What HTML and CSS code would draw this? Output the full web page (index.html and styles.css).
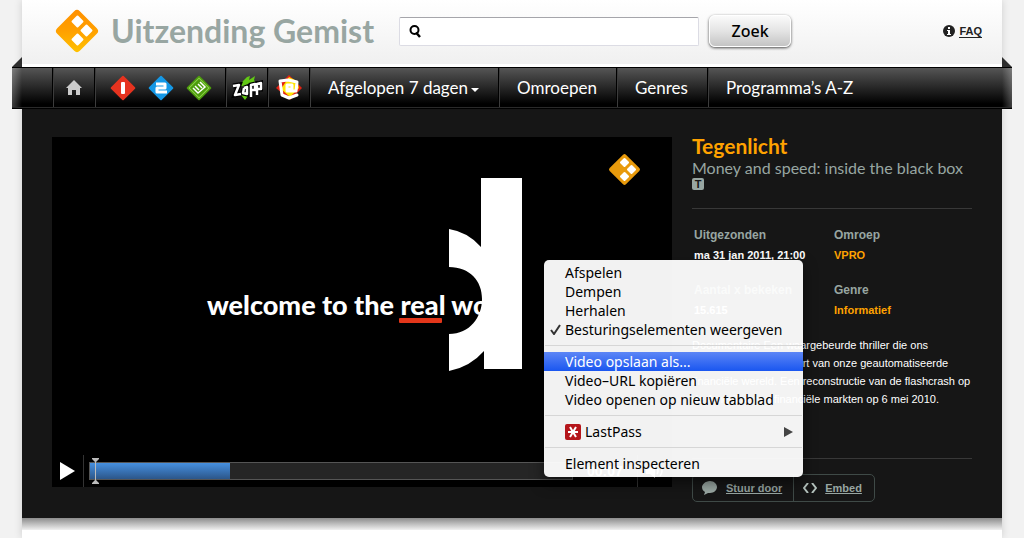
FILE: index.html
```html
<!DOCTYPE html>
<html lang="nl">
<head>
    <meta charset="UTF-8">
    <meta name="viewport" content="width=device-width, initial-scale=1.0">
    <title>Uitzending Gemist - Tegenlicht</title>

    <link rel="stylesheet" href="styles.css">
</head>
<body>
    <div class="page">
        <header class="header">
            <a href="#" class="brand">
                <svg class="logo" viewBox="0 0 44 44" width="44" height="44" aria-hidden="true">
                    <defs>
                        <linearGradient id="logoFill" x1="0" y1="0" x2="1" y2="1">
                            <stop offset="0" stop-color="#ff8f00"/>
                            <stop offset="0.5" stop-color="#ffa000"/>
                            <stop offset="1" stop-color="#ffc400"/>
                        </linearGradient>
                    </defs>
                    <rect x="6" y="6" width="32" height="32" rx="4" fill="url(#logoFill)" transform="rotate(45 22 22)"/>
                    <g fill="#fff">
                        <rect x="18" y="8" width="9" height="9" rx="1" transform="rotate(45 22.5 12.500)"/>
                        <rect x="27" y="17" width="9" height="9" rx="1" transform="rotate(45 31.500 21.500)"/>
                        <rect x="18" y="26" width="9" height="9" rx="1" transform="rotate(45 22.5 30.500)"/>
                    </g>
                </svg>
                <span class="brand-name">Uitzending Gemist</span>
            </a>
            <form class="search">
                <div class="search-box">
                    <svg class="search-icon" viewBox="0 0 12 13" width="12" height="13" aria-hidden="true">
                        <circle cx="5.500" cy="5" r="4" fill="none" stroke="#000" stroke-width="2"/>
                        <path d="M7 7.500L11 12" stroke="#000" stroke-width="2.500"/>
                    </svg>
                    <input type="text" name="q" class="search-input" aria-label="Zoeken">
                </div>
                <button type="submit" class="search-button">Zoek</button>
            </form>
            <a href="#" class="faq">
                <svg viewBox="0 0 12 12" width="12" height="12" aria-hidden="true">
                    <circle cx="6" cy="6" r="6" fill="#222"/>
                    <path d="M5 2h2v2H5zM4 5h3v4h1v1H4V9h1V6H4z" fill="#fff"/>
                </svg>
                <span>FAQ</span>
            </a>
        </header>

        <nav class="nav">
            <ul>
                <li class="nav-icon">
                    <a href="#" aria-label="Home">
                        <svg viewBox="0 0 16 15" width="16" height="15">
                            <path d="M8 0L16 8H14V15H10V10H6V15H2V8H0Z" fill="#ccc"/>
                        </svg>
                    </a>
                </li>
                <li class="channels">
                    <a href="#" aria-label="Nederland 1">
                        <svg viewBox="0 0 26 26" width="26" height="26">
                            <rect x="4" y="4" width="18" height="18" rx="1" fill="#e6331f" transform="rotate(45 13 13)"/>
                            <rect x="11" y="7" width="4" height="12" rx="1" fill="#fff"/>
                        </svg>
                    </a>
                    <a href="#" aria-label="Nederland 2">
                        <svg viewBox="0 0 26 26" width="26" height="26">
                            <rect x="4" y="4" width="18" height="18" rx="1" fill="#1598e6" transform="rotate(45 13 13)"/>
                            <path d="M8 9H17V13H9V17H19" fill="none" stroke="#fff" stroke-width="3" stroke-linejoin="round"/>
                        </svg>
                    </a>
                    <a href="#" aria-label="Nederland 3">
                        <svg viewBox="0 0 26 26" width="26" height="26">
                            <rect x="4" y="4" width="18" height="18" rx="1" fill="#4c9c0c" transform="rotate(45 13 13)"/>
                            <rect x="6" y="6" width="14" height="14" fill="none" stroke="#8fcf4c" transform="rotate(45 13 13)"/>
                            <path d="M7 13L12 18L19 12L14 7M9 11L13 15M12 9L16 13" fill="none" stroke="#fff" stroke-width="1.500"/>
                        </svg>
                    </a>
                </li>
                <li class="nav-icon">
                    <a href="#" aria-label="Zapp">
                        <svg viewBox="0 0 32 26" width="32" height="26">
                            <path d="M8 10L16 2L19 1L18 5L24 1L23 5L25 8L14 12ZM10 20L14 25L17 21Z" fill="#62c815"/>
                            <path d="M2 11L8 10L4 20L10 19M13 13L12 18L16 19V12L13 13M20 22V10L24 9V15H20M26 20V9L30 8V14H27" fill="none" stroke="#000" stroke-width="5"/>
                            <path d="M2 11L8 10L4 20L10 19M13 13L12 18L16 19V12L13 13M20 22V10L24 9V15H20M26 20V9L30 8V14H27" fill="none" stroke="#fff" stroke-width="2.500" stroke-linejoin="round"/>
                        </svg>
                    </a>
                </li>
                <li class="nav-icon">
                    <a href="#" aria-label="Zappelin">
                        <svg viewBox="0 0 28 28" width="28" height="28">
                            <path d="M14 1L27 14L15 26L1 14Z" fill="#e32213"/>
                            <path d="M14 3L22 7L24 14L15 23L6 15Z" fill="#ffe400"/>
                            <path d="M12 15H17V11H12V17H21L22 8L13 6L5 7L7 21L14 24L22 21" fill="none" stroke="#fff" stroke-width="3" stroke-linejoin="round" stroke-linecap="round"/>
                        </svg>
                    </a>
                </li>
                <li>
                    <a href="#">Afgelopen 7 dagen
                        <svg class="caret" viewBox="0 0 8 4" width="8" height="4" aria-hidden="true"><path d="M0 0H8L4 4Z" fill="#fff"/></svg>
                    </a>
                </li>
                <li><a href="#">Omroepen</a></li>
                <li><a href="#">Genres</a></li>
                <li><a href="#">Programma’s A-Z</a></li>
            </ul>
        </nav>

        <main class="main">
            <div class="player">
                <svg class="scene" viewBox="0 0 620 318" aria-hidden="true">
                    <path d="M429 41H470V232H432V214Q418 230 397 234V197C418 197 430 180 430 162S418 130 397 130V92Q416 95 429 110Z" fill="#fff"/>
                    <text x="155" y="178" class="scene-text">welcome to the real wo</text>
                    <rect x="347" y="181" width="43" height="5" rx="1" fill="#e2361a"/>
                    <g transform="translate(556 15)">
                        <rect x="5" y="6" width="23" height="23" rx="2" fill="#e89a0c" transform="rotate(45 16.500 17.500)"/>
                        <g fill="#fff">
                            <rect x="13" y="7" width="7" height="7" rx="1" transform="rotate(45 16.500 10.500)"/>
                            <rect x="20" y="14" width="7" height="7" rx="1" transform="rotate(45 23.500 17.500)"/>
                            <rect x="13" y="21" width="7" height="7" rx="1" transform="rotate(45 16.500 24.500)"/>
                        </g>
                    </g>
                </svg>
                <div class="controls">
                    <button type="button" class="play" aria-label="Afspelen">
                        <svg viewBox="0 0 15 18" width="15" height="18"><path d="M0 0L15 9L0 18Z" fill="#fff"/></svg>
                    </button>
                    <div class="track">
                        <div class="buffered"></div>
                        <svg class="handle" viewBox="0 0 7 26" width="7" height="26" aria-hidden="true">
                            <path d="M0 0H7V1L4 4V22L7 25V26H0V25L3 22V4L0 1Z" fill="#bbb"/>
                        </svg>
                    </div>
                    <span class="time">00:07</span>
                    <button type="button" class="volume" aria-label="Volume">
                        <svg viewBox="0 0 18 14" width="18" height="14">
                            <path d="M0 4H4L9 0V14L4 10H0Z" fill="#fff"/>
                            <path d="M11 4Q13 7 11 10M14 2Q18 7 14 12" fill="none" stroke="#fff" stroke-width="1.500"/>
                        </svg>
                    </button>
                </div>

                <!-- Context menu of the video -->
                <div class="menu" role="menu">
                    <button type="button" role="menuitem">Afspelen</button>
                    <button type="button" role="menuitem">Dempen</button>
                    <button type="button" role="menuitem">Herhalen</button>
                    <button type="button" role="menuitem">
                        <svg class="check" viewBox="0 0 11 11" width="11" height="11" aria-hidden="true"><path d="M1 6L4 10L10 1" fill="none" stroke="#333" stroke-width="2"/></svg>
                        Besturingselementen weergeven
                    </button>
                    <hr>
                    <button type="button" role="menuitem" class="active">Video opslaan als...</button>
                    <button type="button" role="menuitem">Video–URL kopiëren</button>
                    <button type="button" role="menuitem">Video openen op nieuw tabblad</button>
                    <hr>
                    <button type="button" role="menuitem">
                        <svg viewBox="0 0 16 16" width="16" height="16" aria-hidden="true">
                            <rect x="0" y="0" width="16" height="16" rx="2" fill="#b5161b"/>
                            <path d="M5 3L11 13M11 3L5 13M3 8H13" stroke="#fff" stroke-width="2"/>
                        </svg>
                        LastPass
                        <svg class="arrow" viewBox="0 0 9 10" width="9" height="10" aria-hidden="true"><path d="M0 0L9 5L0 10Z" fill="#444"/></svg>
                    </button>
                    <hr>
                    <button type="button" role="menuitem">Element inspecteren</button>
                </div>
            </div>

            <aside class="info">
                <h1>Tegenlicht</h1>
                <h2>Money and speed: inside the black box</h2>
                <span class="badge">T</span>
                <dl class="meta">
                    <div>
                        <dt>Uitgezonden</dt>
                        <dd>ma 31 jan 2011, 21:00</dd>
                    </div>
                    <div>
                        <dt>Omroep</dt>
                        <dd><a href="#">VPRO</a></dd>
                    </div>
                    <div>
                        <dt>Aantal x bekeken</dt>
                        <dd>15.615</dd>
                    </div>
                    <div>
                        <dt>Genre</dt>
                        <dd><a href="#">Informatief</a></dd>
                    </div>
                </dl>
                <p class="description">
                    Documentaire Een waargebeurde thriller die ons<br>
                    meeneemt naar het hart van onze geautomatiseerde<br>
                    financiële wereld. Een reconstructie van de flashcrash op<br>
                    de Amerikaanse financiële markten op 6 mei 2010.
                </p>
                <div class="share">
                    <a href="#">
                        <svg viewBox="0 0 16 14" width="16" height="14" aria-hidden="true">
                            <path d="M8 0C12 0 15 3 15 6S12 12 8 12L6 12L2 14L3 11C1 10 0 8 0 6S3 0 8 0Z" fill="#9aa8a3"/>
                        </svg>
                        <span>Stuur door</span>
                    </a>
                    <a href="#">
                        <svg viewBox="0 0 14 10" width="14" height="10" aria-hidden="true">
                            <path d="M5 0L1 5L5 10M9 0L13 5L9 10" fill="none" stroke="#b4c2bd" stroke-width="2"/>
                        </svg>
                        <span>Embed</span>
                    </a>
                </div>
            </aside>
        </main>
        <div class="bottom-shadow"></div>
    </div>
</body>
</html>
```
FILE: styles.css
```css
* {
    box-sizing: border-box;
}

body {
    margin: 0;
    min-height: 100vh;
    display: flex;
    background-color: #f2f2f2;
    font-family: "Liberation Sans", Arial, sans-serif;
    font-size: 12px;
    color: #fff;
}

a {
    color: inherit;
    text-decoration: none;
}

button {
    font: inherit;
    border: none;
    padding: 0;
    background: none;
    cursor: pointer;
}

.page {
    flex: 1;
    max-width: 980px;
    margin: 0 auto;
    background-color: #fff;
    box-shadow: 0 0 8px rgba(0, 0, 0, 0.15);
}

/* Header */
.header {
    display: flex;
    align-items: center;
    height: 64px;
    margin-bottom: 3px;
    padding: 0 20px 2px 33px;
    background: linear-gradient(#fff, #f0f0f0);
}

.brand {
    display: flex;
    align-items: center;
    gap: 12px;
}

.brand-name {
    font-family: Lato, sans-serif;
    font-size: 32px;
    font-weight: bold;
    line-height: 44px;
    color: #98a6a2;
    white-space: nowrap;
}

.search {
    display: flex;
    align-items: center;
    gap: 10px;
    margin: 0 auto 0 25px;
}

.search-box {
    display: flex;
    align-items: center;
    width: 300px;
    height: 29px;
    padding: 0 14px 0 9px;
    gap: 6px;
    background-color: #fff;
    border: 1px solid #dcdce4;
    border-top-color: #a5a5aa;
    border-radius: 2px;
}

.search-icon {
    flex: none;
}

.search-input {
    flex: 1;
    min-width: 0;
    border: none;
    outline: none;
    background: none;
    font-size: 14px;
}

.search-button {
    width: 82px;
    height: 32px;
    border: 1px solid #fff;
    border-radius: 6px;
    background: linear-gradient(#fafafa, #e4e4e4 50%, #c4c4c4);
    box-shadow: 0 1px 3px rgba(0, 0, 0, 0.7);
    font-family: "Noto Sans", sans-serif;
    font-size: 16px;
    font-weight: 500;
    color: #000;
}

.faq {
    display: flex;
    align-items: center;
    gap: 4px;
    font-size: 11px;
    font-weight: bold;
    color: #222;
}

.faq span {
    border-bottom: 1px solid #222;
}

/* Navigation bar, wider than the page with a fold on both sides */
.nav {
    position: relative;
    margin: 0 -10px;
    padding: 0 40px;
    height: 42px;
    background:
        linear-gradient(90deg, rgba(255, 255, 255, 0.25), transparent 10px, transparent calc(100% - 10px), rgba(255, 255, 255, 0.25)),
        linear-gradient(#555, #000 90%);
    border-top: 1px solid #000;
    border-bottom: 1px solid #000;
    box-shadow: inset 0 -1px #2a2a2a;
}

.nav::before,
.nav::after {
    content: "";
    position: absolute;
    top: -11px;
    border-bottom: 10px solid #2e2e2e;
}

.nav::before {
    left: 0;
    border-left: 10px solid transparent;
}

.nav::after {
    right: 0;
    border-right: 10px solid transparent;
}

.nav ul {
    display: flex;
    margin: 0;
    padding: 0;
    list-style: none;
}

.nav li {
    display: flex;
    align-items: center;
    justify-content: center;
    height: 39px;
    padding: 0 19px 0 18px;
    border-left: 1px solid #000;
    box-shadow: inset 1px 0 #3c3c3c;
}

.nav li a {
    display: flex;
    align-items: center;
    gap: 3px;
    font-family: Lato, sans-serif;
    font-size: 17px;
    white-space: nowrap;
}

.nav .nav-icon {
    width: 42px;
    padding: 0;
}

.nav .channels {
    width: 131px;
    padding: 0 0 0 2px;
    gap: 12px;
}

.caret {
    margin-top: 4px;
}

/* Programme */
.main {
    display: flex;
    align-items: flex-start;
    gap: 20px;
    padding: 28px 30px 16px;
    background-color: #161616;
}

.player {
    position: relative;
    flex: 1;
    min-width: 0;
    background-color: #000;
}

.scene {
    display: block;
    width: 100%;
}

.scene-text {
    font-family: Lato, sans-serif;
    font-size: 27px;
    font-weight: 900;
    fill: #fff;
}

.controls {
    display: flex;
    align-items: center;
    height: 32px;
}

.play {
    width: 32px;
    height: 32px;
    border-right: 1px solid #333;
}

.play svg,
.volume svg {
    display: block;
    margin: 0 auto;
}

.track {
    position: relative;
    flex: 1;
    height: 18px;
    margin-left: 5px;
    background-color: #252525;
    border: 1px solid #555;
}

.buffered {
    width: 29%;
    height: 100%;
    background: linear-gradient(#4690e0, #2c5689);
}

.handle {
    position: absolute;
    left: 2px;
    top: -5px;
}

.time {
    width: 64px;
    padding-left: 14px;
    font-size: 14px;
    font-weight: bold;
}

.volume {
    width: 35px;
    height: 32px;
    border-left: 1px solid #333;
}

/* Context menu */
.menu {
    position: absolute;
    left: 492px;
    top: 123px;
    z-index: 1;
    width: 259px;
    padding: 3px 0 4px;
    border-radius: 5px;
    background-color: rgba(255, 255, 255, 0.95);
    box-shadow: 0 6px 14px rgba(0, 0, 0, 0.5);
    font-family: "Noto Sans", sans-serif;
    font-size: 14px;
    color: #000;
}

.menu button {
    position: relative;
    display: flex;
    align-items: center;
    gap: 4px;
    width: 100%;
    height: 19px;
    padding: 0 10px 0 21px;
    color: #000;
    white-space: nowrap;
}

.menu .active {
    background: linear-gradient(#5c86f6, #1a56f0);
    color: #fff;
}

.menu .check {
    position: absolute;
    left: 6px;
}

.menu .arrow {
    margin-left: auto;
}

.menu hr {
    height: 1px;
    margin: 6px 1px;
    border: none;
    background-color: #d6d6d6;
}

/* Programme details */
.info {
    flex: none;
    width: 280px;
}

.info h1,
.info h2 {
    margin: 0;
    font-family: Lato, sans-serif;
    white-space: nowrap;
}

.info h1 {
    margin-bottom: 3px;
    font-size: 21px;
    line-height: 18px;
    color: #ffa200;
}

.info h2 {
    font-size: 16px;
    font-weight: normal;
    line-height: 20px;
    color: #98a6a2;
}

.badge {
    display: block;
    width: 12px;
    height: 12px;
    border-radius: 2px;
    background-color: #98a6a2;
    color: #161616;
    font-size: 11px;
    font-weight: bold;
    line-height: 12px;
    text-align: center;
}

.meta {
    display: grid;
    grid-template-columns: 140px 1fr;
    row-gap: 15px;
    margin: 18px 0 0;
    padding: 16px 0 0 2px;
    border-top: 1px solid #383838;
    font-weight: bold;
    line-height: 20px;
}

.meta dt {
    color: #98a6a2;
}

.meta dd {
    margin: 0;
    font-size: 11px;
}

.meta a {
    color: #ffa200;
}

.description {
    margin: 16px 0 66px;
    font-size: 11px;
    line-height: 18px;
    white-space: nowrap;
}

.share {
    display: flex;
    position: relative;
    width: 183px;
    height: 28px;
    border: 1px solid #3f4a47;
    border-radius: 5px;
    font-size: 11px;
    font-weight: bold;
    color: #98a6a2;
}

.share::before {
    content: "";
    position: absolute;
    left: -1px;
    top: -17px;
    width: 280px;
    border-top: 1px solid #383838;
}

.share a {
    display: flex;
    align-items: center;
    gap: 8px;
    padding: 0 11px 0 9px;
}

.share a + a {
    border-left: 1px solid #3f4a47;
}

.share span {
    text-decoration: underline;
}

.bottom-shadow {
    height: 12px;
    background: linear-gradient(#8c8c8c, #f0f0f0);
}
```
